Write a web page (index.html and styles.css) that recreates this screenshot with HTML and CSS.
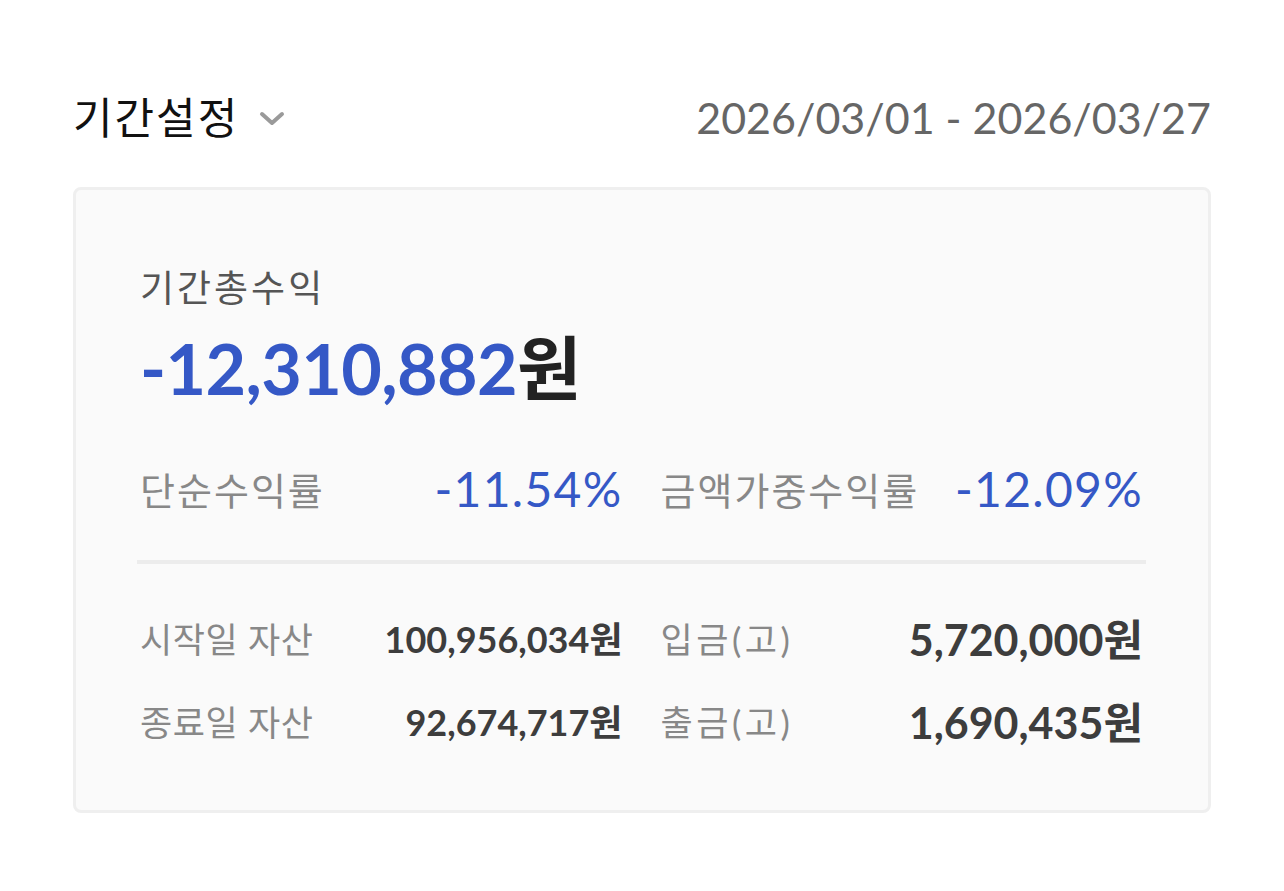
FILE: index.html
```html
<!DOCTYPE html>
<html lang="ko">
<head>
<meta charset="utf-8">
<title>기간설정</title>
<link rel="stylesheet" href="styles.css">
</head>
<body>
<div class="page">
  <header class="head">
    <button class="period">
      <span>기간설정</span>
      <svg class="chev" width="26" height="16" viewBox="0 0 26 16"><path d="M3 3 L13 12 L23 3" fill="none" stroke="#9a9a9a" stroke-width="4" stroke-linecap="round" stroke-linejoin="round"/></svg>
    </button>
    <div class="range">2026/03/01 - 2026/03/27</div>
  </header>
  <section class="card">
    <div class="title">기간총수익</div>
    <div class="total"><span class="neg">-12,310,882</span>원</div>
    <div class="grid rates">
      <div class="pair"><span class="lbl">단순수익률</span><span class="rate">-11.54%</span></div>
      <div class="pair"><span class="lbl">금액가중수익률</span><span class="rate">-12.09%</span></div>
    </div>
    <div class="divider"></div>
    <div class="grid rows">
      <div class="pair"><span class="lbl">시작일 자산</span><span class="val">100,956,034원</span></div>
      <div class="pair"><span class="lbl wide">입금(고)</span><span class="val big">5,720,000원</span></div>
      <div class="pair"><span class="lbl">종료일 자산</span><span class="val">92,674,717원</span></div>
      <div class="pair"><span class="lbl wide">출금(고)</span><span class="val big">1,690,435원</span></div>
    </div>
  </section>
</div>
</body>
</html>
```

FILE: styles.css
```css
* { box-sizing: border-box; }
html, body { margin: 0; padding: 0; background: #fff; }
body { font-family: Lato, "Noto Sans CJK KR", sans-serif; }
.page { padding: 88px 73px 0 73px; }
.head { display: flex; justify-content: space-between; align-items: center; height: 60px; }
.period { display: flex; align-items: center; gap: 20px; background: none; border: 0; padding: 0; font-family: inherit; font-size: 43px; letter-spacing: 2px; line-height: 60px; color: #111; font-weight: 400; }
.chev { margin-top: 2px; }
.range { font-size: 43px; color: #666; line-height: 60px; }
.card { margin-top: 39px; border: 3px solid #efefef; border-radius: 8px; background: #fafafa; padding: 73px 65px 60px 64px; }
.title { font-size: 37px; letter-spacing: 3px; line-height: 50px; color: #555; }
.total { margin-top: 15px; font-size: 70px; line-height: 80px; font-weight: 700; color: #222; letter-spacing: -0.6px; }
.neg { color: #3558c6; }
.grid { display: grid; grid-template-columns: 1fr 1fr; column-gap: 38px; }
.pair { display: flex; justify-content: space-between; align-items: center; }
.rates { margin-top: 50px; }
.rates .pair { height: 60px; }
.lbl { font-size: 36px; color: #888; }
.rates .lbl { font-size: 38px; letter-spacing: 2px; }
.rate { font-size: 48px; letter-spacing: 1.3px; color: #3558c6; }
.divider { height: 4px; background: #ececec; margin: 42px -3px 0 -3px; }
.rows { margin-top: 43px; row-gap: 23px; }
.rows .pair { height: 60px; }
.rows .lbl { font-size: 35px; letter-spacing: 0.6px; }
.rows .lbl.wide { letter-spacing: 3.5px; }
.val { font-size: 36px; font-weight: 700; color: #3d3d3d; }
.val.big { font-size: 43px; }
```
